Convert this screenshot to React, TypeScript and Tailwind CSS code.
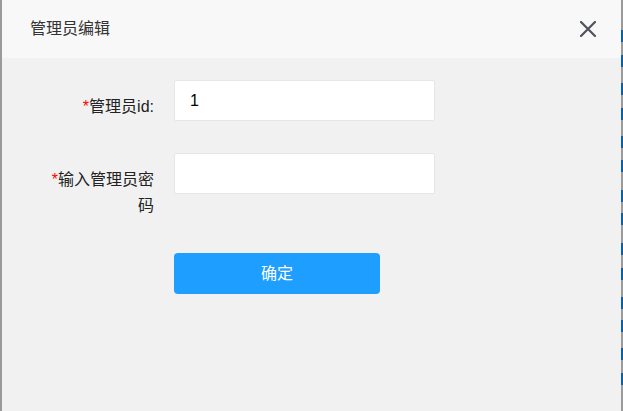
const FONT = { fontFamily: '"Liberation Sans", "Noto Sans CJK SC", sans-serif' }

function CloseIcon() {
  return (
    <svg width="16" height="16" viewBox="0 0 16 16" className="text-[#4f525c]">
      <path d="M1 1 L15 15 M15 1 L1 15" stroke="currentColor" strokeWidth="2.2" strokeLinecap="round" />
    </svg>
  )
}

function FormRow({ label, value }: { label: string; value?: string }) {
  return (
    <div className="flex items-start">
      <label className="w-[110px] ml-[42px] pt-[14px] text-right text-[16px] leading-[26px] text-[#222]">
        <span className="text-[#ff0000]">*</span>
        {label}
      </label>
      <input
        readOnly
        value={value ?? ''}
        className="ml-[20px] w-[261px] h-[41px] px-[15px] bg-white border border-[#e6e6e6] rounded-[2px] text-[16px] text-black outline-none"
        style={FONT}
      />
    </div>
  )
}

export default function App() {
  const blueBlocks = [30, 55, 83, 108, 136, 160, 190, 213, 243, 268, 297, 320, 348, 373]
  return (
    <div className="w-[623px] h-[411px] flex overflow-hidden" style={FONT}>
      <div className="w-[2px] bg-[#9a9a9a]" />
      <div className="flex-1 flex flex-col bg-[#f0f0f0]">
        <div className="h-[58px] flex items-center justify-between bg-[#f8f8f8] pl-[28px] pr-[25px]">
          <span className="text-[16px] text-[#333]">管理员编辑</span>
          <CloseIcon />
        </div>
        <div className="flex-1 flex flex-col pt-[22px] bg-[#f1f1f1]">
          <FormRow label="管理员id:" value="1" />
          <div className="mt-[32px]">
            <FormRow label="输入管理员密码" />
          </div>
          <button
            className="mt-[34px] ml-[172px] w-[206px] h-[41px] rounded-[4px] bg-[#1e9fff] text-white text-[16px]"
          >
            确定
          </button>
        </div>
      </div>
      <div className="w-[2px] relative bg-[#9a9a9a]">
        {blueBlocks.map(y => (
          <div key={y} className="absolute left-0 w-[2px] h-[12px] bg-[#0b5ea8]" style={{ top: y }} />
        ))}
      </div>
    </div>
  )
}
